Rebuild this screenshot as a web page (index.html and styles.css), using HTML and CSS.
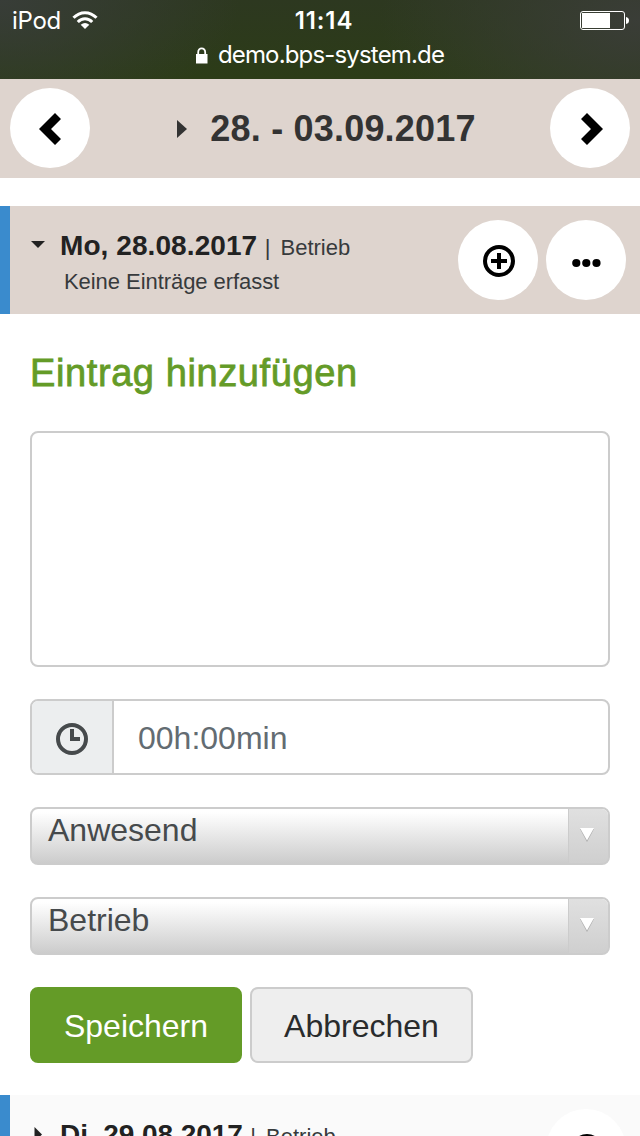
FILE: index.html
```html
<!DOCTYPE html>
<html lang="de">
<head>
<meta charset="utf-8">
<title>Wochenübersicht</title>
<link rel="stylesheet" href="styles.css">
</head>
<body>
<div class="screen">
  <header class="browser">
    <div class="status">
      <div class="carrier"><span class="device">iPod</span>
        <svg width="26" height="19" viewBox="0 0 26 19" fill="none" stroke="#fff" stroke-width="3"><path d="M1.500 6.800C8-.1 18-.1 24.500 6.800"/><path d="M5.800 11C10 6.600 16 6.600 20.200 11"/><path d="M13 18L8.700 13.700Q13 10.300 17.300 13.700Z" fill="#fff" stroke="none"/></svg>
      </div>
      <div class="clock">11:14</div>
      <svg class="battery" width="50" height="20" viewBox="0 0 50 20"><rect x=".5" y=".5" width="44" height="18" rx="2.500" fill="none" stroke="#fff"/><path d="M2 2h28v15H2z" fill="#fff"/><path d="M46 6q3 .5 3 3.500T46 13z" fill="#fff"/></svg>
    </div>
    <div class="address">
      <svg width="12" height="17" viewBox="0 0 12 17"><path d="M0 7h11.500v9.500H0z" fill="#fff"/><path d="M2.200 8V5.200a3.500 3.900 0 0 1 7 0V8" fill="none" stroke="#fff" stroke-width="1.800"/></svg>
      <span class="host">demo.bps-system.de</span>
    </div>
  </header>

  <nav class="week">
    <button class="round"><svg width="80" height="80" viewBox="0 0 80 80"><path d="M45 25l6 6-10 10 10 10-6 6-16-16z"/></svg></button>
    <div class="range"><svg width="10" height="18" viewBox="0 0 10 18"><path d="M0 0l10 9-10 9z" fill="#333"/></svg><span>28. - 03.09.2017</span></div>
    <button class="round"><svg width="80" height="80" viewBox="0 0 80 80"><path d="M37 25l16 16-16 16-6-6 10-10-10-10z"/></svg></button>
  </nav>

  <section class="day open">
    <div class="marker"><svg width="14" height="14" viewBox="0 0 14 14"><path d="M0 4h14L7 11z"/></svg></div>
    <div class="info">
      <div class="line"><strong>Mo, 28.08.2017</strong><span class="bar">|</span><span>Betrieb</span></div>
      <div class="note">Keine Einträge erfasst</div>
    </div>
    <button class="round"><svg width="80" height="80" viewBox="0 0 80 80"><circle cx="41" cy="41" r="14" fill="none" stroke="#000" stroke-width="4"/><path d="M39 33h4v6h6v4h-6v6h-4v-6h-6v-4h6z"/></svg></button>
    <button class="round"><svg width="80" height="80" viewBox="0 0 80 80"><circle cx="30.300" cy="43" r="4.100"/><circle cx="40.300" cy="43" r="4.100"/><circle cx="50.500" cy="43" r="4.100"/></svg></button>
  </section>

  <form class="entry">
    <h2>Eintrag hinzufügen</h2>
    <textarea class="text"></textarea>
    <div class="time">
      <div class="addon"><svg width="32" height="32" viewBox="0 0 32 32"><circle cx="16" cy="16" r="14" fill="none" stroke="#464a4c" stroke-width="4"/><path d="M14 6h4v8h6v4H14z" fill="#464a4c"/></svg></div>
      <div class="value">00h:00min</div>
    </div>
    <div class="select"><span class="choice">Anwesend</span><span class="drop"><svg width="16" height="16" viewBox="0 0 16 16"><path d="M1 2h14L8 15z" fill="#aaa"/><path d="M1 1h14L8 13.500z" fill="#fff"/></svg></span></div>
    <div class="select"><span class="choice">Betrieb</span><span class="drop"><svg width="16" height="16" viewBox="0 0 16 16"><path d="M1 2h14L8 15z" fill="#aaa"/><path d="M1 1h14L8 13.500z" fill="#fff"/></svg></span></div>
    <div class="actions"><button type="button" class="btn save">Speichern</button><button type="button" class="btn cancel">Abbrechen</button></div>
  </form>

  <section class="day next">
    <div class="marker"><svg width="14" height="18" viewBox="0 0 14 18"><path d="M3.500 1l7.500 7.500-7.500 7.500z"/></svg></div>
    <div class="info">
      <div class="line"><strong>Di, 29.08.2017</strong><span class="bar">|</span><span>Betrieb</span></div>
    </div>
    <button class="round"><svg width="80" height="80" viewBox="0 0 80 80"><circle cx="41" cy="41" r="14" fill="none" stroke="#000" stroke-width="4"/><path d="M39 33h4v6h6v4h-6v6h-4v-6h-6v-4h6z"/></svg></button>
  </section>
</div>
</body>
</html>
```

FILE: styles.css
```css
* { box-sizing: border-box; }
html, body { margin: 0; height: 1136px; overflow: hidden; }
body { background: #fff; color: #292b2c; font-family: "Liberation Sans", Arial, sans-serif; }
svg { display: block; flex: none; }
button { margin: 0; font: inherit; }
.screen { width: 640px; height: 1136px; overflow: hidden; display: flex; flex-direction: column; }
.screen > * { flex: none; }

.browser {
  height: 79px;
  color: #fff;
  font-family: Inter, sans-serif;
  background:
    radial-gradient(ellipse 240px 130px at 0 0, #383d38, transparent),
    radial-gradient(ellipse 260px 150px at 640px 20px, #3a3d37, transparent),
    linear-gradient(#2d3820, #2c3c17);
}
.status { display: grid; grid-template-columns: 1fr auto 1fr; align-items: center; height: 41px; padding: 0 10px 0 12px; }
.carrier { display: flex; align-items: center; gap: 11px; }
.device { font-size: 24px; letter-spacing: -.3px; }
.clock { font-size: 24px; font-weight: 600; letter-spacing: .9px; padding-left: 6px; }
.battery { justify-self: end; }
.address { display: flex; align-items: center; justify-content: center; gap: 10px; height: 28px; }
.host { font-size: 24px; line-height: 28px; letter-spacing: -.83px; }

.week { height: 99px; background: #ded4ce; padding: 0 10px 2px; display: flex; align-items: center; justify-content: space-between; margin-bottom: 28px; }
.range { display: flex; align-items: center; gap: 23px; color: #333; font-size: 36px; font-weight: 700; letter-spacing: .2px; margin-left: 13px; padding-top: 3px; }
.round { width: 80px; height: 80px; padding: 0; border: 0; border-radius: 50%; background: #fff; flex: none; }

.day { height: 108px; border-left: 10px solid #3a8bcd; background: #fafafa; display: flex; align-items: flex-start; gap: 8px; padding: 14px 14px 0 21px; }
.day.open { background: #ded4ce; }
.marker { width: 14px; padding-top: 17px; }
.marker path { fill: #222; }
.info { flex: 1; padding: 8px 0 0 7px; font-size: 22px; color: #373a3c; }
.line { display: flex; align-items: baseline; line-height: 36px; white-space: nowrap; }
.line strong { font-size: 28px; letter-spacing: .08px; color: #222; }
.next strong { letter-spacing: -.06px; }
.bar { margin: 0 10px 0 7.500px; }
.note { line-height: 32px; padding-left: 4px; letter-spacing: -.06px; }

.entry { height: 781px; padding: 37px 30px 0; font-size: 32px; }
.entry h2 { margin: 0 0 36px; font-size: 38px; line-height: 44px; font-weight: 400; letter-spacing: .6px; color: #649b27; -webkit-text-stroke: .8px #649b27; white-space: nowrap; }
.text { display: block; width: 100%; height: 236px; margin: 0 0 32px; border: 2px solid #ccc; border-radius: 8px; background: #fff; resize: none; }
.time { display: flex; height: 76px; margin-bottom: 32px; border: 2px solid #ccc; border-radius: 8px; overflow: hidden; }
.addon { width: 82px; padding-left: 24px; padding-top: 4px; display: flex; align-items: center; background: #eceeef; border-right: 2px solid #ccc; }
.value { padding-left: 24px; line-height: 74px; color: #636c72; }
.select { display: flex; height: 58px; margin-bottom: 32px; border: 2px solid #ccc; border-radius: 8px; overflow: hidden; background: linear-gradient(#fff 6%, #ccc); }
.choice { flex: 1; padding-left: 16px; line-height: 42px; color: #464a4c; }
.drop { width: 40px; border-left: 1px solid #ccc; padding: 18px 0 0 10px; background: linear-gradient(#e0e0e0, #cfcfcf); }
.actions { display: flex; gap: 8px; }
.btn { height: 76px; border: 2px solid #ccc; border-radius: 8px; padding: 2px 0 0; white-space: nowrap; }
.save { width: 212px; border-color: #649b27; background: #649b27; color: #fff; }
.cancel { width: 223px; background: #eee; color: #292b2c; }
```
